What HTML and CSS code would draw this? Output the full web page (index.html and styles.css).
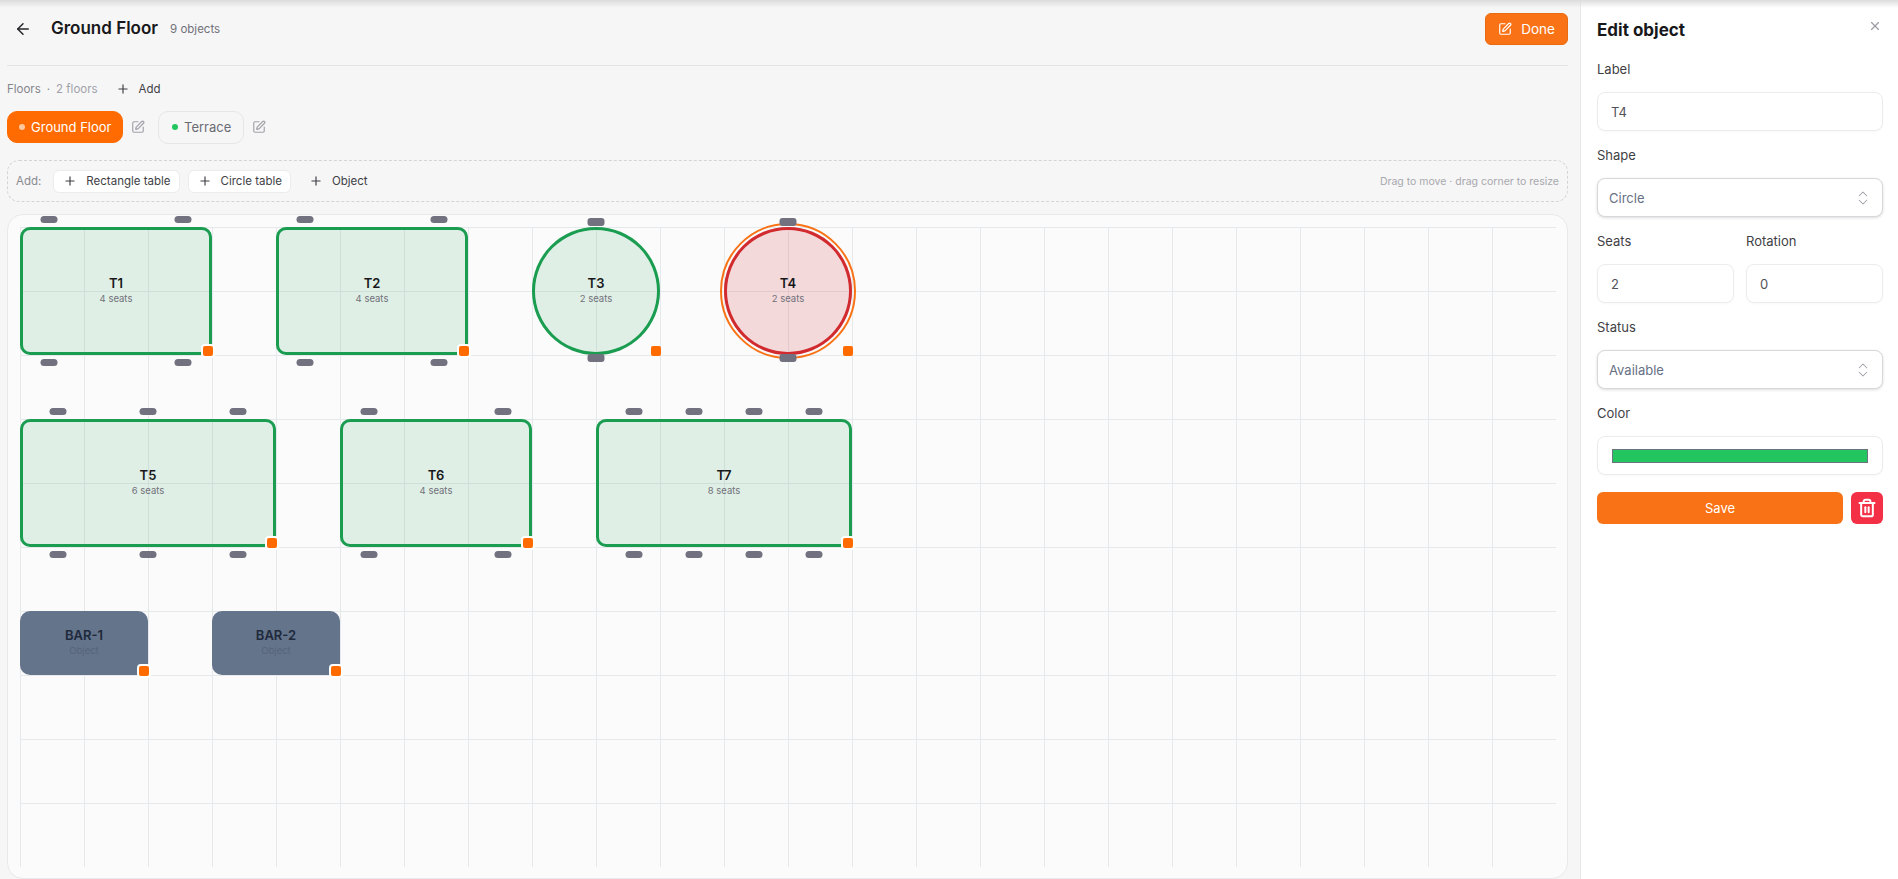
FILE: index.html
```html
<!DOCTYPE html>
<html lang="en">
<head>
    <meta charset="UTF-8">
    <meta name="viewport" content="width=device-width, initial-scale=1.0">
    <title>Ground Floor</title>
    <link rel="stylesheet" href="styles.css">
</head>
<body>
    <svg class="icon-defs" aria-hidden="true">
        <symbol id="i-pen" viewBox="0 0 24 24"><path d="M12 3H5a2 2 0 0 0-2 2v14a2 2 0 0 0 2 2h14a2 2 0 0 0 2-2v-7"/><path d="M18.375 2.625a1 1 0 0 1 3 3l-9.013 9.014a2 2 0 0 1-.853.505l-2.873.84a.5.5 0 0 1-.62-.62l.84-2.873a2 2 0 0 1 .506-.852z"/></symbol>
        <symbol id="i-plus" viewBox="0 0 24 24"><path d="M5 12h14"/><path d="M12 5v14"/></symbol>
        <symbol id="i-updown" viewBox="0 0 24 24"><path d="m7 15 5 5 5-5"/><path d="m7 9 5-5 5 5"/></symbol>
    </svg>

    <div class="shell">
        <main class="main">
            <header class="topbar">
                <div class="topbar-left">
                    <svg class="back" viewBox="0 0 24 24"><path d="m12 19-7-7 7-7"/><path d="M19 12H5"/></svg>
                    <h1>Ground Floor</h1>
                    <span class="count">9 objects</span>
                </div>
                <button class="btn-done"><svg class="ico"><use href="#i-pen"/></svg>Done</button>
            </header>

            <div class="floors-head">
                <span class="floors-title">Floors</span>
                <span class="floors-dot">·</span>
                <span class="floors-num">2 floors</span>
                <button class="ghost ghost-add"><svg class="ico"><use href="#i-plus"/></svg>Add</button>
            </div>

            <div class="floor-tabs">
                <button class="tab active"><span class="dot"></span>Ground Floor</button>
                <svg class="ico tab-edit"><use href="#i-pen"/></svg>
                <button class="tab"><span class="dot"></span>Terrace</button>
                <svg class="ico tab-edit"><use href="#i-pen"/></svg>
            </div>

            <div class="addbar">
                <span class="addbar-label">Add:</span>
                <button class="ghost chip"><svg class="ico"><use href="#i-plus"/></svg>Rectangle table</button>
                <button class="ghost chip"><svg class="ico"><use href="#i-plus"/></svg>Circle table</button>
                <button class="ghost chip plain"><svg class="ico"><use href="#i-plus"/></svg>Object</button>
                <span class="addbar-hint">Drag to move · drag corner to resize</span>
            </div>

            <div class="canvas-card">
                <div class="canvas">
                    <div class="obj rect t1">
                        <i class="seat top s15"></i><i class="seat top s85"></i>
                        <b>T1</b><small>4 seats</small>
                        <i class="seat bottom s15"></i><i class="seat bottom s85"></i>
                        <i class="handle"></i>
                    </div>
                    <div class="obj rect t2">
                        <i class="seat top s15"></i><i class="seat top s85"></i>
                        <b>T2</b><small>4 seats</small>
                        <i class="seat bottom s15"></i><i class="seat bottom s85"></i>
                        <i class="handle"></i>
                    </div>
                    <div class="obj circle t3">
                        <i class="seat top s50"></i>
                        <b>T3</b><small>2 seats</small>
                        <i class="seat bottom s50"></i>
                        <i class="handle"></i>
                    </div>
                    <div class="obj circle busy selected t4">
                        <i class="seat top s50"></i>
                        <b>T4</b><small>2 seats</small>
                        <i class="seat bottom s50"></i>
                        <i class="handle"></i>
                    </div>
                    <div class="obj rect t5">
                        <i class="seat top s15"></i><i class="seat top s50"></i><i class="seat top s85"></i>
                        <b>T5</b><small>6 seats</small>
                        <i class="seat bottom s15"></i><i class="seat bottom s50"></i><i class="seat bottom s85"></i>
                        <i class="handle"></i>
                    </div>
                    <div class="obj rect t6">
                        <i class="seat top s15"></i><i class="seat top s85"></i>
                        <b>T6</b><small>4 seats</small>
                        <i class="seat bottom s15"></i><i class="seat bottom s85"></i>
                        <i class="handle"></i>
                    </div>
                    <div class="obj rect t7">
                        <i class="seat top s15"></i><i class="seat top s38"></i><i class="seat top s62"></i><i class="seat top s85"></i>
                        <b>T7</b><small>8 seats</small>
                        <i class="seat bottom s15"></i><i class="seat bottom s38"></i><i class="seat bottom s62"></i><i class="seat bottom s85"></i>
                        <i class="handle"></i>
                    </div>
                    <div class="obj bar bar1">
                        <b>BAR-1</b><small>Object</small>
                        <i class="handle"></i>
                    </div>
                    <div class="obj bar bar2">
                        <b>BAR-2</b><small>Object</small>
                        <i class="handle"></i>
                    </div>
                </div>
            </div>
        </main>

        <aside class="panel">
            <div class="panel-head">
                <h2>Edit object</h2>
                <svg class="close" viewBox="0 0 24 24"><path d="M18 6 6 18"/><path d="m6 6 12 12"/></svg>
            </div>

            <div class="field">
                <label>Label</label>
                <input class="control" type="text" value="T4">
            </div>
            <div class="field">
                <label>Shape</label>
                <div class="control select">Circle<svg class="updown"><use href="#i-updown"/></svg></div>
            </div>
            <div class="field-pair">
                <div class="field">
                    <label>Seats</label>
                    <input class="control" type="text" value="2">
                </div>
                <div class="field">
                    <label>Rotation</label>
                    <input class="control" type="text" value="0">
                </div>
            </div>
            <div class="field">
                <label>Status</label>
                <div class="control select">Available<svg class="updown"><use href="#i-updown"/></svg></div>
            </div>
            <div class="field">
                <label>Color</label>
                <div class="control color"><span class="swatch"></span></div>
            </div>

            <div class="panel-actions">
                <button class="btn-save">Save</button>
                <button class="btn-delete">
                    <svg viewBox="0 0 24 24"><path d="M3 6h18"/><path d="M19 6v14a2 2 0 0 1-2 2H7a2 2 0 0 1-2-2V6"/><path d="M8 6V4a2 2 0 0 1 2-2h4a2 2 0 0 1 2 2v2"/><path d="M10 11v6"/><path d="M14 11v6"/></svg>
                </button>
            </div>
        </aside>
    </div>
</body>
</html>
```

FILE: styles.css
```css
* {
    box-sizing: border-box;
}

html, body {
    margin: 0;
    height: 879px;
    overflow: hidden;
}

body {
    font-family: Inter, "Noto Sans", sans-serif;
    background: #f6f6f6;
    color: #18181b;
    position: relative;
}

/* soft shadow along the top edge of the window */
body::after {
    content: "";
    position: absolute;
    top: 0;
    left: 0;
    right: 0;
    height: 8px;
    background: linear-gradient(#dcdcdc, rgba(230,230,230,0));
    pointer-events: none;
}

button {
    font-family: inherit;
    border: none;
    cursor: pointer;
}

.icon-defs {
    display: none;
}

svg {
    fill: none;
    stroke: currentColor;
    stroke-width: 2;
    stroke-linecap: round;
    stroke-linejoin: round;
}

.ico {
    width: 14px;
    height: 14px;
    flex: none;
}

.shell {
    display: flex;
    height: 879px;
}

.main {
    width: 1580px;
    flex: none;
    padding: 13px 12px 0 7px;
}

/* top bar */
.topbar {
    display: flex;
    justify-content: space-between;
    align-items: center;
    height: 53px;
    padding-bottom: 20px;
    border-bottom: 1px solid #e4e4e7;
}

.topbar-left {
    display: flex;
    align-items: center;
}

.back {
    width: 18px;
    height: 18px;
    margin-left: 7px;
    color: #27272a;
}

.topbar h1 {
    font-size: 17px;
    font-weight: 600;
    margin: 0 0 0 19px;
    position: relative;
    top: -1px;
}

.count {
    font-size: 11.5px;
    color: #71717a;
    margin-left: 12px;
}

.btn-done {
    width: 83px;
    height: 32px;
    display: flex;
    align-items: center;
    justify-content: center;
    gap: 9px;
    background: #f97316;
    border: 1px solid #ea6a10;
    color: #fff;
    border-radius: 6px;
    font-size: 13.5px;
}

/* floors */
.floors-head {
    display: flex;
    align-items: center;
    height: 16px;
    margin-top: 15px;
    font-size: 11.5px;
    color: #85858c;
}

.floors-dot {
    margin: 0 6px;
}

.floors-num {
    color: #a1a1aa;
}

.ghost {
    display: flex;
    align-items: center;
    gap: 9px;
    background: none;
    color: #3f3f46;
    font-size: 11.5px;
    padding: 0;
}

.ghost-add {
    margin-left: 18px;
}

.floor-tabs {
    display: flex;
    align-items: center;
    height: 34px;
    margin-top: 13px;
}

.tab {
    display: flex;
    align-items: center;
    gap: 6px;
    height: 33px;
    padding: 0 12px 0 13px;
    border-radius: 10px;
    border: 1px solid #e6e6e6;
    background: #f6f6f6;
    color: #6b6b73;
    font-size: 13px;
    white-space: nowrap;
}

.tab.active {
    height: 32px;
    padding: 0 0 0 11px;
    background: #ff6b00;
    border-color: #ff6b00;
    color: #fff;
    width: 116px;
}

.dot {
    width: 6px;
    height: 6px;
    border-radius: 50%;
    background: #22c55e;
    flex: none;
}

.tab.active .dot {
    background: #ffc9a0;
}

.tab-edit {
    color: #a1a1aa;
    margin: 0 13px 0 8px;
}

/* add bar */
.addbar {
    display: flex;
    align-items: center;
    height: 42px;
    margin-top: 16px;
    padding: 0 8px;
    border: 1px dashed #d4d4d8;
    border-radius: 12px;
    font-size: 11.5px;
}

.addbar-label {
    color: #8a8a91;
    margin-right: 12px;
}

.chip {
    height: 23px;
    padding: 0 8px 0 9px;
    margin-right: 8px;
    background: #fff;
    border: 1px solid #ececec;
    border-radius: 6px;
}

.chip.plain {
    background: none;
    border-color: transparent;
}

.addbar-hint {
    margin-left: auto;
    font-size: 10.5px;
    color: #a8a8ae;
}

/* canvas */
.canvas-card {
    margin-top: 12px;
    width: 1561px;
    height: 665px;
    padding: 12px;
    background: #fbfbfb;
    border: 1px solid #e9e9eb;
    border-radius: 16px;
}

.canvas {
    position: relative;
    width: 1536px;
    height: 640px;
    background-image:
        linear-gradient(to right, #e6e9ec 1px, transparent 1px),
        linear-gradient(to bottom, #e6e9ec 1px, transparent 1px);
    background-size: 64px 64px;
}

.obj {
    position: absolute;
    display: flex;
    flex-direction: column;
    align-items: center;
    justify-content: center;
    text-align: center;
    padding-bottom: 2px;
}

.obj b {
    font-size: 13px;
    font-weight: 600;
    line-height: 16px;
    color: #18181b;
}

.obj small {
    font-size: 9.5px;
    line-height: 15px;
    color: #71717a;
}

.rect, .circle {
    background: rgba(26,157,80,0.12);
    box-shadow: inset 0 0 0 3px #1a9d50;
}

.rect {
    border-radius: 10px;
}

.circle {
    border-radius: 50%;
}

.circle.busy {
    background: rgba(209,42,47,0.16);
    box-shadow: inset 0 0 0 3px #d12a2f;
}

.selected {
    outline: 2px solid #f97316;
    outline-offset: 2px;
}

.bar {
    background: #64748b;
    border-radius: 10px;
}

.bar b {
    color: #1e293b;
}

.bar small {
    color: #566479;
}

/* object places on the canvas */
.t1 { left: 0; top: 0; width: 192px; height: 128px; }
.t2 { left: 256px; top: 0; width: 192px; height: 128px; }
.t3 { left: 512px; top: 0; width: 128px; height: 128px; }
.t4 { left: 704px; top: 0; width: 128px; height: 128px; }
.t5 { left: 0; top: 192px; width: 256px; height: 128px; }
.t6 { left: 320px; top: 192px; width: 192px; height: 128px; }
.t7 { left: 576px; top: 192px; width: 256px; height: 128px; }
.bar1 { left: 0; top: 384px; width: 128px; height: 64px; }
.bar2 { left: 192px; top: 384px; width: 128px; height: 64px; }

.seat {
    position: absolute;
    width: 17px;
    height: 7px;
    background: #71717f;
    border-radius: 4px;
    transform: translateX(-50%);
}

.seat.top { top: -11px; }
.seat.bottom { bottom: -11px; }
.circle .seat { height: 8px; border-radius: 3px; }
.circle .seat.top { top: -9px; }
.circle .seat.bottom { bottom: -7px; }

.s15 { left: 15%; }
.s38 { left: 38.3%; }
.s50 { left: 50%; }
.s62 { left: 61.7%; }
.s85 { left: 85%; }

.handle {
    position: absolute;
    right: -3px;
    bottom: -3px;
    width: 14px;
    height: 14px;
    background: #ff6b00;
    border: 2px solid #fff;
    border-radius: 4px;
}

.circle .handle {
    right: -3px;
    border-color: transparent;
    background-clip: padding-box;
}

/* side panel */
.panel {
    flex: 1;
    background: #fff;
    border-left: 1px solid #e7e7e7;
    padding: 0 15px 0 16px;
}

.panel-head {
    display: flex;
    justify-content: space-between;
    height: 61px;
    padding-top: 19px;
}

.panel-head h2 {
    font-size: 17px;
    font-weight: 700;
    margin: 0;
    line-height: 22px;
}

.close {
    width: 14px;
    height: 14px;
    margin: 0 1px 0 0;
    color: #9a9aa2;
}

.field {
    margin-bottom: 16px;
}

.field label {
    display: block;
    font-size: 13px;
    line-height: 16px;
    color: #3f3f46;
    margin-bottom: 15px;
}

.control {
    display: block;
    width: 100%;
    height: 39px;
    padding: 0 13px;
    font-family: inherit;
    font-size: 13px;
    color: #52525b;
    background: #fff;
    border: 1px solid #ececee;
    border-radius: 8px;
    outline: none;
    box-shadow: 0 1px 2px rgba(0,0,0,0.03);
}

.select {
    display: flex;
    align-items: center;
    justify-content: space-between;
    padding: 0 10px 0 11px;
    color: #667085;
    border-color: #d8d8dc;
    box-shadow: 0 1px 3px rgba(0,0,0,0.14);
}

.updown {
    width: 18px;
    height: 18px;
    color: #a1a1aa;
    stroke-width: 1.4;
}

.field-pair {
    display: grid;
    grid-template-columns: 1fr 1fr;
    gap: 12px;
}

.color {
    display: flex;
    align-items: center;
    padding: 0 14px;
}

.swatch {
    display: block;
    width: 100%;
    height: 14px;
    background: #22c55e;
    border: 1px solid #6b7280;
}

.panel-actions {
    display: flex;
    gap: 8px;
    margin-top: 17px;
}

.btn-save {
    flex: 1;
    height: 32px;
    background: #f97316;
    color: #fff;
    font-size: 13px;
    border-radius: 6px;
}

.btn-delete {
    width: 32px;
    height: 32px;
    padding: 0;
    display: flex;
    align-items: center;
    justify-content: center;
    background: #f43047;
    color: #fff;
    border-radius: 6px;
}

.btn-delete svg {
    width: 20px;
    height: 20px;
    stroke-width: 2.4;
}
```
